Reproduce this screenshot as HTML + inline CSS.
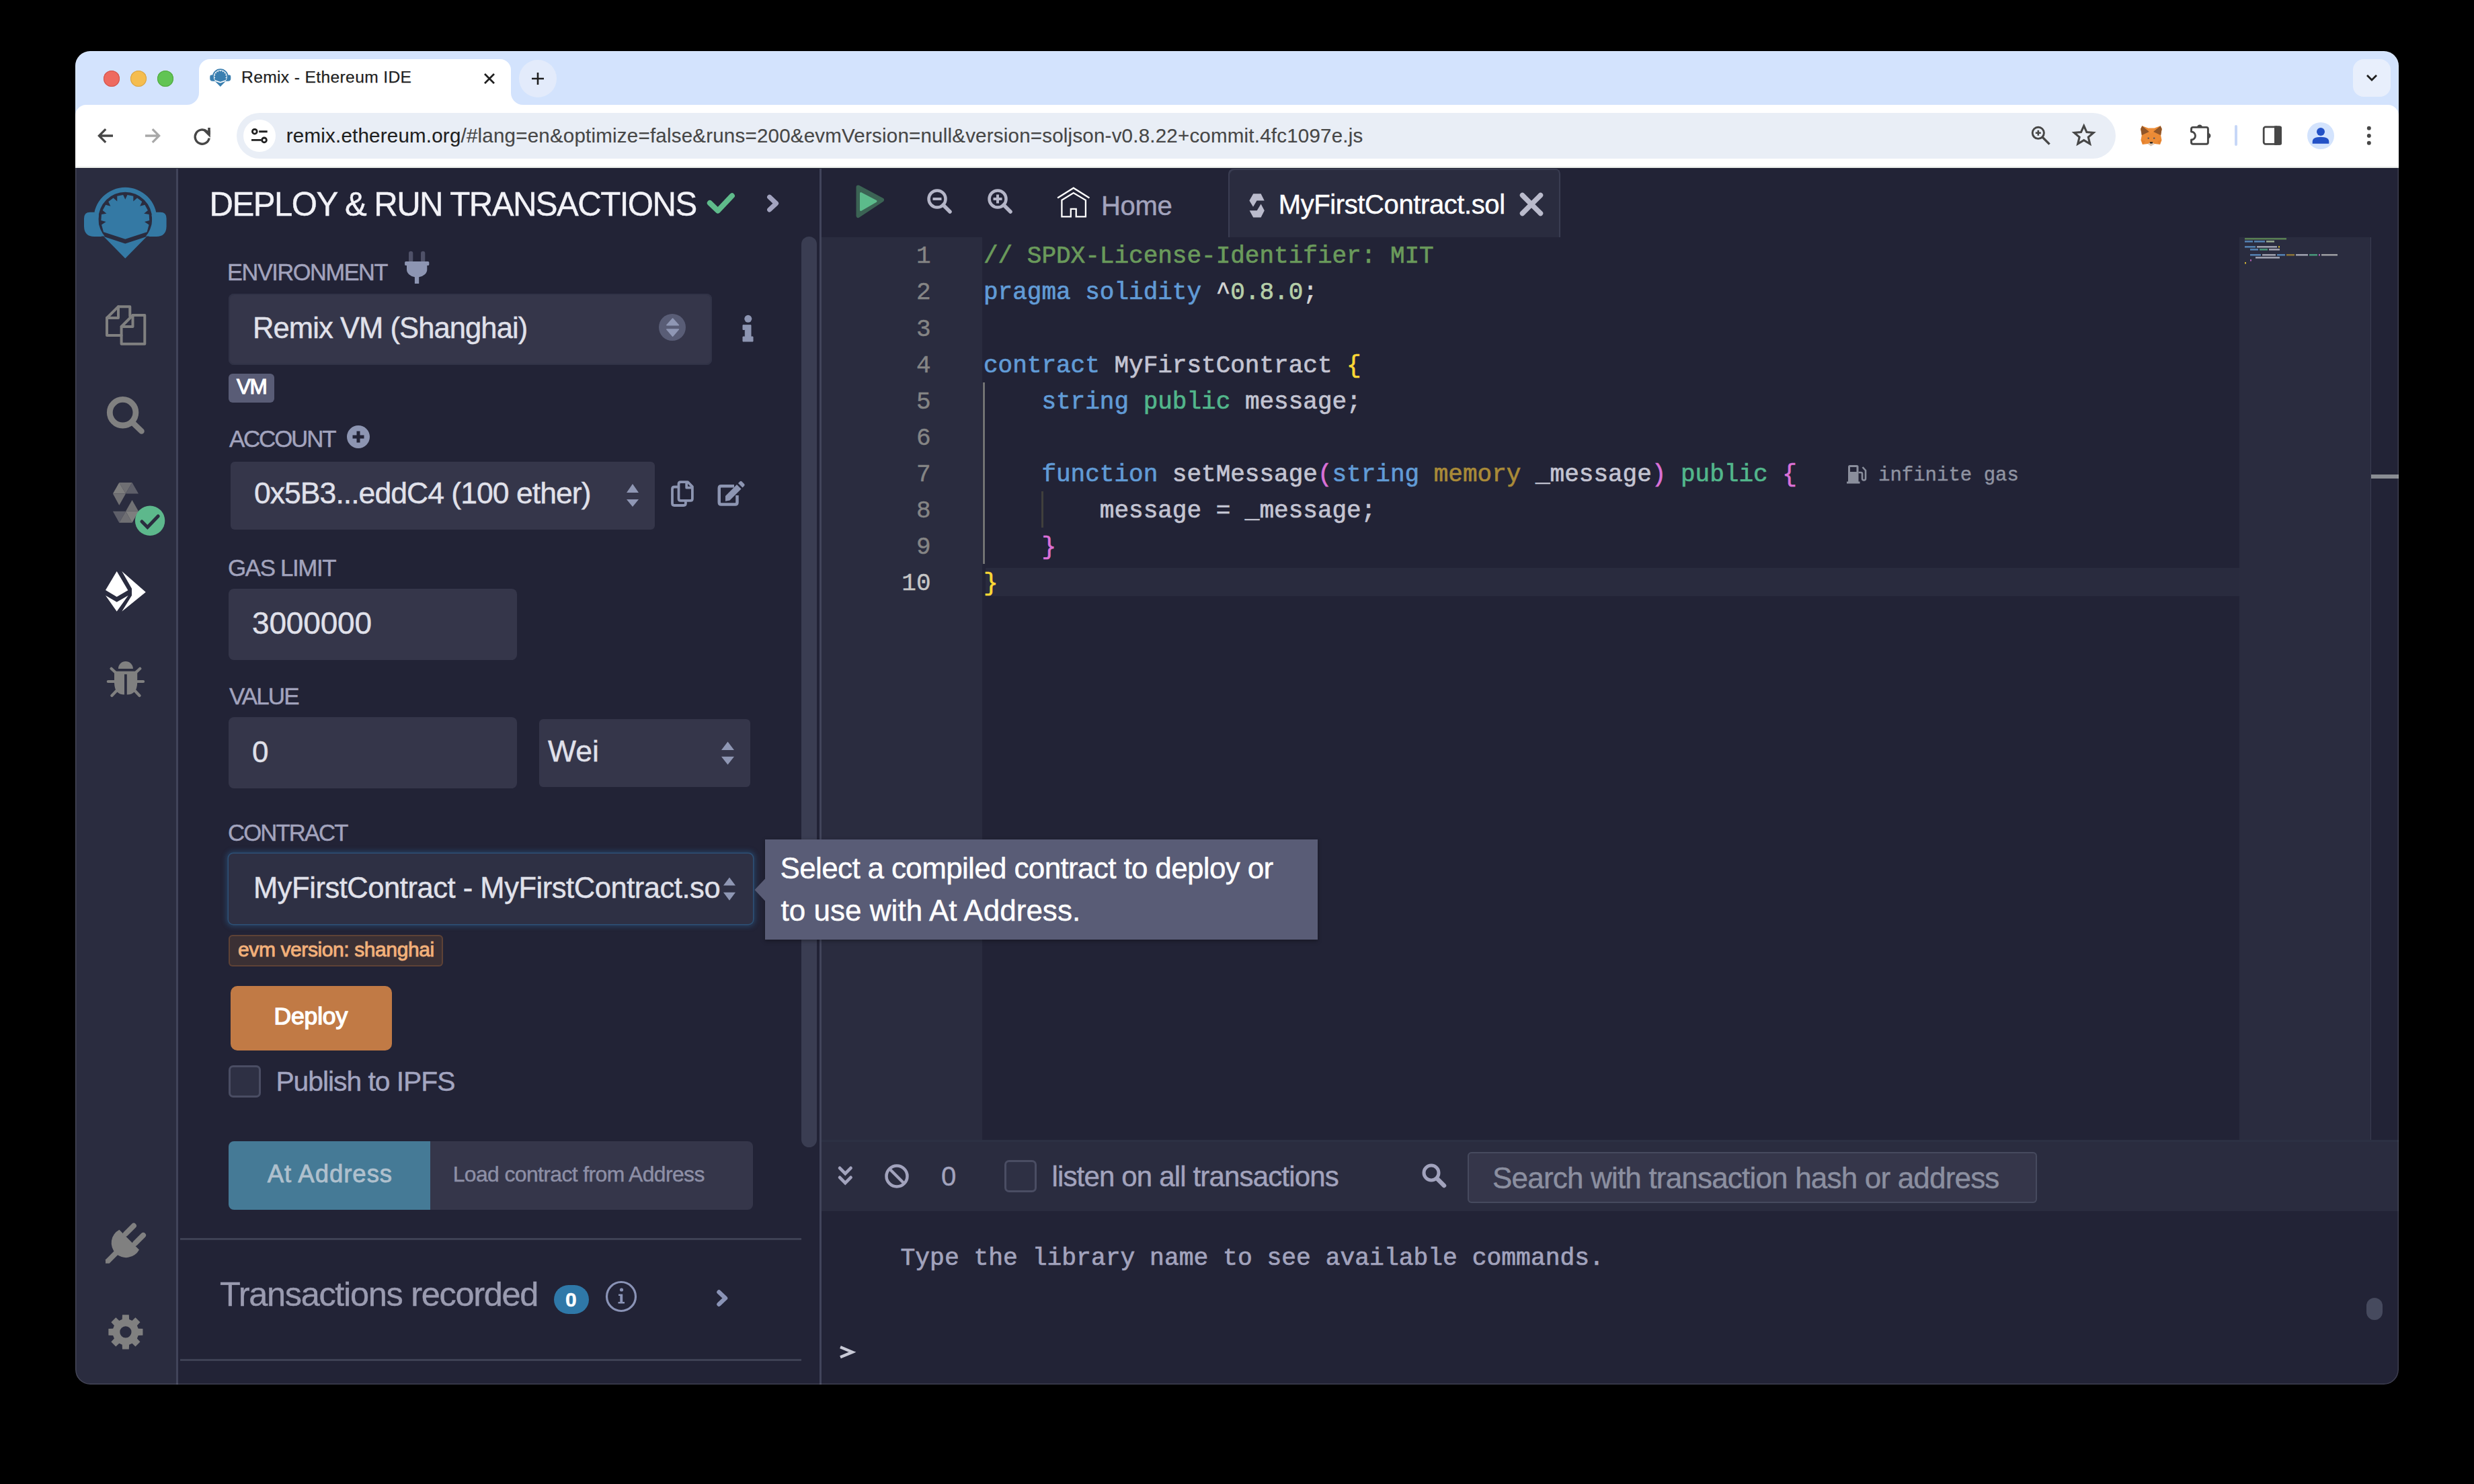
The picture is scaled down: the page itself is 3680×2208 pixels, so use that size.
<!DOCTYPE html><html><head><meta charset="utf-8"><style>
html,body{margin:0;padding:0;background:#000;width:3680px;height:2208px;overflow:hidden}
.r{position:absolute}
.s{position:absolute;overflow:visible}
.t{position:absolute;line-height:1;white-space:pre;-webkit-text-stroke-width:0.45px}
</style></head><body><div id="win" style="position:absolute;left:0;top:0;width:3680px;height:2208px;clip-path:inset(76px 112px 148px 112px round 22px)">
<div class="r" style="left:112px;top:76px;width:3456px;height:224px;background:#d3e3fd;"></div>
<div class="r" style="left:154px;top:105px;width:24px;height:24px;border-radius:12px;background:#ee6a5f;box-shadow:inset 0 0 0 1px #d0524a"></div>
<div class="r" style="left:194px;top:105px;width:24px;height:24px;border-radius:12px;background:#f5bd4f;box-shadow:inset 0 0 0 1px #d7a243"></div>
<div class="r" style="left:234px;top:105px;width:24px;height:24px;border-radius:12px;background:#61c454;box-shadow:inset 0 0 0 1px #50a83f"></div>
<svg class="s" style="left:0px;top:76px" width="3680" height="90" viewBox="0 0 3680 90"><path d="M 278 80 A 18 18 0 0 0 296 62 V 28 A 16 16 0 0 1 312 12 H 744 A 16 16 0 0 1 760 28 V 62 A 18 18 0 0 0 778 80 Z" fill="#fff"/></svg>
<div class="r" style="left:772px;top:89px;width:56px;height:56px;border-radius:28px;background:#e3ebfb"></div>
<svg class="s" style="left:788px;top:105px" width="24" height="24" viewBox="0 0 24 24"><path d="M12 3 V21 M3 12 H21" stroke="#1f1f1f" stroke-width="2.6" fill="none"/></svg>
<div class="r" style="left:3500px;top:88px;width:56px;height:56px;border-radius:16px;background:#e8effc"></div>
<svg class="s" style="left:3516px;top:104px" width="24" height="24" viewBox="0 0 24 24"><path d="M5 8 L12 15 L19 8" stroke="#1f1f1f" stroke-width="2.8" fill="none"/></svg>
<div class="r" style="left:112px;top:156px;width:3456px;height:92px;background:#fff;border-radius:16px 16px 0 0"></div>
<div class="r" style="left:112px;top:248px;width:3456px;height:2px;background:#e2e5e2;"></div>
<div class="r" style="left:352px;top:168px;width:2795px;height:68px;border-radius:34px;background:#e9eef6"></div>
<div class="r" style="left:362px;top:178px;width:48px;height:48px;border-radius:24px;background:#fff"></div>
<svg class="s" style="left:142px;top:188px" width="28" height="28" viewBox="0 0 28 28"><path d="M26 14 H6 M15.2 4.2 L5.4 14 L15.2 23.8" stroke="#474747" stroke-width="3.3" fill="none" stroke-linejoin="miter"/></svg>
<svg class="s" style="left:214px;top:188px" width="28" height="28" viewBox="0 0 28 28"><path d="M2 14 H22 M12.8 4.2 L22.6 14 L12.8 23.8" stroke="#a8a8a8" stroke-width="3.3" fill="none"/></svg>
<svg class="s" style="left:286px;top:188px" width="30" height="30" viewBox="0 0 30 30"><path d="M25.2 17.5 A 10.6 10.6 0 1 1 21.8 7.6" stroke="#474747" stroke-width="3.4" fill="none"/><path d="M16.2 6.2 H26.8 V 16.8 Z" fill="#474747"/><path d="M25 2 V 12" stroke="#474747" stroke-width="3.6"/></svg>
<svg class="s" style="left:374px;top:190px" width="24" height="24" viewBox="0 0 24 24"><circle cx="4.8" cy="5.7" r="3.4" stroke="#1f1f1f" stroke-width="2.8" fill="none"/><path d="M11.2 5.7 H23.7" stroke="#1f1f1f" stroke-width="2.9"/><circle cx="19" cy="18.4" r="3.4" stroke="#1f1f1f" stroke-width="2.8" fill="none"/><path d="M0 18.4 H14.5" stroke="#1f1f1f" stroke-width="2.9"/></svg>
<svg class="s" style="left:3010px;top:175px" width="60" height="50" viewBox="0 0 60 50"><circle cx="21.8" cy="22.8" r="8.6" stroke="#474747" stroke-width="2.9" fill="none"/><path d="M28 29 L38.6 39.6" stroke="#474747" stroke-width="3.3"/><path d="M21.8 18.8 V26.8 M17.8 22.8 H25.8" stroke="#474747" stroke-width="2.6"/></svg>
<svg class="s" style="left:3080px;top:182px" width="40" height="40" viewBox="0 0 40 40"><path d="M19.7 5.2 L23.9 14.6 L34 15.4 L26.3 22 L28.7 32 L19.7 26.6 L10.7 32 L13.1 22 L5.4 15.4 L15.5 14.6 Z" stroke="#474747" stroke-width="3.1" fill="none" stroke-linejoin="miter"/></svg>
<svg class="s" style="left:3183px;top:186px" width="34" height="34" viewBox="0 0 34 34"><path d="M3.3 1.35 L12.7 4.8 H21.2 L30.6 1.35 L32.7 5.8 L31.1 15.3 L32.5 22.6 L30.1 28.9 L21.7 27.9 L16.4 30.8 L12.2 27.9 L3.8 28.9 L1.45 22.6 L2.8 15.3 L1.2 5.8 Z" fill="#eb8b36"/><path d="M3.3 1.35 L13.8 10 L2.8 15.3 L1.2 5.8 Z M30.6 1.35 L20.1 10 L31.1 15.3 L32.7 5.8 Z" fill="#915629"/><path d="M12.7 4.8 H21.2 L20.1 10 L16.95 13 L13.8 10 Z" fill="#f08f3a"/><path d="M11.7 27.9 L16.4 31.5 L22.2 27.9 L19.6 26.5 H14.3 Z" fill="#d9c6b5"/><path d="M14.6 25.3 H19.3 L18.6 27.6 H15.3 Z" fill="#1a1a1a"/><path d="M11.6 19.6 L13.8 19.6 M20.1 19.6 L22.3 19.6" stroke="#3a4a6a" stroke-width="1.6"/><path d="M2 22 L8 24 L5 28.5 Z M32 22 L26 24 L29 28.5 Z" fill="#e07a2a" opacity="0.6"/></svg>
<svg class="s" style="left:3254px;top:180px" width="40" height="40" viewBox="0 0 40 40"><path d="M5.5 16 V12 Q5.5 9.4 8 9.4 H27.9 Q30.4 9.4 30.4 12 V32 Q30.4 34.2 27.9 34.2 H8 Q5.5 34.2 5.5 32 V28 A 6 6 0 0 0 5.5 16 Z" stroke="#474747" stroke-width="2.9" fill="none" stroke-linejoin="round"/><path d="M13.8 9.6 A 4.2 4.2 0 0 1 22.2 9.6 Z M30.2 17.8 A 4.2 4.2 0 0 1 30.2 26.2 Z" fill="#474747"/></svg>
<div class="r" style="left:3324px;top:186px;width:4px;height:31px;background:#c7d7f7;border-radius:2px"></div>
<svg class="s" style="left:3360px;top:182px" width="40" height="40" viewBox="0 0 40 40"><rect x="7.2" y="6.9" width="25.4" height="25.5" rx="2.8" stroke="#474747" stroke-width="2.8" fill="none"/><rect x="23" y="5.5" width="11" height="28.3" rx="2.5" fill="#474747"/><rect x="23" y="5.5" width="4" height="28.3" fill="#474747"/></svg>
<div class="r" style="left:3432px;top:182px;width:40px;height:40px;border-radius:20px;background:#d3e3fd"></div>
<svg class="s" style="left:3432px;top:182px" width="40" height="40" viewBox="0 0 40 40"><circle cx="20" cy="13.9" r="6" fill="#2351c6"/><path d="M7.7 31.8 V29 Q7.7 21.7 20 21.7 Q32.3 21.7 32.3 29 V31.8 Z" fill="#2351c6"/></svg>
<svg class="s" style="left:3512px;top:182px" width="24" height="40" viewBox="0 0 24 40"><circle cx="11.8" cy="8.8" r="3" fill="#474747"/><circle cx="11.8" cy="19.9" r="3" fill="#474747"/><circle cx="11.8" cy="30.8" r="3" fill="#474747"/></svg>
<svg class="s" style="left:716px;top:105px" width="24" height="24" viewBox="0 0 24 24"><path d="M5 5 L19 19 M19 5 L5 19" stroke="#1f1f1f" stroke-width="2.8"/></svg>
<div class="r" style="left:112px;top:250px;width:150px;height:1810px;background:#2a2c3f;"></div>
<div class="r" style="left:262px;top:250px;width:3px;height:1810px;background:#41445a;"></div>
<div class="r" style="left:265px;top:250px;width:954px;height:1810px;background:#222336;"></div>
<div class="r" style="left:1219px;top:250px;width:3px;height:1810px;background:#41445a;"></div>
<div class="r" style="left:1222px;top:250px;width:2346px;height:1810px;background:#222336;"></div>
<div class="r" style="left:112px;top:250px;width:3456px;height:1px;background:#1a1b2e;"></div>
<svg class="s" style="left:120px;top:270px" width="135" height="120" viewBox="0 0 135 120"><clipPath id="rc3479a4"><rect x="0" y="0" width="135" height="81.5"/></clipPath><path clip-path="url(#rc3479a4)" fill-rule="evenodd" d="M 19.299999999999997 55.8 A 47 47 0 1 1 113.3 55.8 A 47 47 0 1 1 19.299999999999997 55.8 Z M 26.299999999999997 55.8 A 40 40 0 1 0 106.3 55.8 A 40 40 0 1 0 26.299999999999997 55.8 Z" fill="#3479a4"/><path d="M 20 45.7 H 14 Q 5 45.7 5 55 V 67 Q 5.5 82 20 82 H 31 L 27.5 72 Q 25.5 60 27 50 Z" fill="#3479a4"/><path d="M 112.6 45.7 H 118.6 Q 127.6 45.7 127.6 55 V 67 Q 127.1 82 112.6 82 H 101.6 L 105.1 72 Q 107.1 60 105.6 50 Z" fill="#3479a4"/><path d="M31.08 64.58 L31.29 64.20 L37.62 60.09 L30.37 58.00 L30.96 48.93 L38.42 47.81 L32.69 42.90 L37.18 34.64 L44.41 36.77 L41.29 29.90 L48.57 24.47 L54.27 29.41 L54.28 21.86 L63.16 19.94 L66.30 26.80 L69.44 19.94 L78.32 21.86 L78.33 29.41 L84.03 24.47 L91.31 29.90 L88.19 36.77 L95.42 34.64 L99.91 42.90 L94.18 47.81 L101.64 48.93 L102.23 58.00 L94.98 60.09 L101.31 64.20 L101.52 64.58 L98.60 75.20 L66.30 85.70 L34.00 75.20 Z" fill="#3479a4"/><path d="M 34.4 82 L 66.3 92.5 L 98.2 82 L 66.3 114.4 Z" fill="#3479a4"/></svg>
<svg class="s" style="left:310.7px;top:99.8px" width="34.2" height="30.4" viewBox="0 0 135 120"><clipPath id="rc3a7fb0"><rect x="0" y="0" width="135" height="81.5"/></clipPath><path clip-path="url(#rc3a7fb0)" fill-rule="evenodd" d="M 19.299999999999997 55.8 A 47 47 0 1 1 113.3 55.8 A 47 47 0 1 1 19.299999999999997 55.8 Z M 26.299999999999997 55.8 A 40 40 0 1 0 106.3 55.8 A 40 40 0 1 0 26.299999999999997 55.8 Z" fill="#3a7fb0"/><path d="M 20 45.7 H 14 Q 5 45.7 5 55 V 67 Q 5.5 82 20 82 H 31 L 27.5 72 Q 25.5 60 27 50 Z" fill="#3a7fb0"/><path d="M 112.6 45.7 H 118.6 Q 127.6 45.7 127.6 55 V 67 Q 127.1 82 112.6 82 H 101.6 L 105.1 72 Q 107.1 60 105.6 50 Z" fill="#3a7fb0"/><path d="M31.08 64.58 L31.29 64.20 L37.62 60.09 L30.37 58.00 L30.96 48.93 L38.42 47.81 L32.69 42.90 L37.18 34.64 L44.41 36.77 L41.29 29.90 L48.57 24.47 L54.27 29.41 L54.28 21.86 L63.16 19.94 L66.30 26.80 L69.44 19.94 L78.32 21.86 L78.33 29.41 L84.03 24.47 L91.31 29.90 L88.19 36.77 L95.42 34.64 L99.91 42.90 L94.18 47.81 L101.64 48.93 L102.23 58.00 L94.98 60.09 L101.31 64.20 L101.52 64.58 L98.60 75.20 L66.30 85.70 L34.00 75.20 Z" fill="#3a7fb0"/><path d="M 34.4 82 L 66.3 92.5 L 98.2 82 L 66.3 114.4 Z" fill="#3a7fb0"/></svg>
<svg class="s" style="left:150px;top:440px" width="80" height="80" viewBox="0 0 80 80"><g stroke="#808080" stroke-width="4" fill="none" stroke-linejoin="round" stroke-linecap="round"><path d="M43.3 30.5 V16.2 H26 L9 33 V58.9 H30.6"/><path d="M26 16.2 V33 H9"/><path d="M47.5 29 H65.3 V71.8 H30.6 V46 Z"/><path d="M47.5 29 V46 H30.6"/></g></svg>
<svg class="s" style="left:150px;top:580px" width="80" height="80" viewBox="0 0 80 80"><circle cx="32.6" cy="33.7" r="19.3" stroke="#808080" stroke-width="8.8" fill="none"/><path d="M48 49.5 L60.5 61.5" stroke="#808080" stroke-width="8.5" stroke-linecap="round"/></svg>
<svg class="s" style="left:150px;top:705px" width="100" height="100" viewBox="0 0 100 100"><path d="M27.3 13 L46.5 13 L37 29.6 Z" fill="#6f6f73"/><path d="M27.3 13 L37 29.6 L17.9 29.6 Z" fill="#7e7e7e"/><path d="M46.5 13 L56 29.6 L37 29.6 Z" fill="#5e5f69"/><path d="M17.9 29.6 L37 29.6 L27.3 46.8 Z" fill="#717174"/><path d="M46.5 39 L56 55.8 L37 55.8 Z" fill="#717174"/><path d="M37 55.8 L56 55.8 L46.5 72.8 Z" fill="#7e7e7e"/><path d="M17.9 55.8 L37 55.8 L27.3 72.8 Z" fill="#5e5f69"/><path d="M37 55.8 L46.5 72.8 L27.3 72.8 Z" fill="#6f6f73"/><circle cx="73.1" cy="69.7" r="22.2" fill="#5db88c"/><path d="M61 71 L69.4 79.5 L85.2 63" stroke="#2a2c3f" stroke-width="5" fill="none" stroke-linecap="round"/></svg>
<svg class="s" style="left:150px;top:840px" width="80" height="80" viewBox="0 0 80 80"><g fill="#fff"><path d="M23.7 10 L40.4 38.3 L23.7 48 L7 38 Z"/><path d="M7 46 L23.7 55.8 L40.7 46 L23.7 69.8 Z"/><path d="M31.3 10 L66.8 41 L31.3 69.8 L46 46 L46 35.8 Z"/></g></svg>
<svg class="s" style="left:150px;top:970px" width="80" height="80" viewBox="0 0 80 80"><g fill="#808080"><path d="M25.9 25 A 11 11 0 0 1 47.9 25 Z"/><path d="M20 28.8 H54.2 V45 Q54.2 63.6 38.8 63.6 V33.2 H35 V63.6 Q20 63.6 20 45 Z"/></g><g stroke="#808080" stroke-width="4.2" stroke-linecap="round"><path d="M15.6 24.8 L22 30.7 M58.3 24.8 L51.9 30.7 M10.8 44 H20 M63.1 44 H54 M16.4 65 L24 57 M57.5 65 L50 57"/></g></svg>
<svg class="s" style="left:150px;top:1810px" width="80" height="80" viewBox="0 0 80 80"><g fill="#808080"><g transform="translate(42.2 34.6) rotate(45)"><path d="M -20.9 0 H 20.9 A 21.9 21.9 0 1 1 -20.9 0 Z"/><rect x="-14" y="-23.5" width="8" height="25" rx="4"/><rect x="6" y="-23.5" width="8" height="25" rx="4"/></g><path d="M34.9 36.3 L7 64.2 L7 69.8 L12.6 69.8 L40.5 41.9 Z"/></g></svg>
<svg class="s" style="left:150px;top:1945px" width="80" height="80" viewBox="0 0 80 80"><path fill-rule="evenodd" fill="#808080" d="M31.70 18.11 L31.99 11.37 L41.81 11.37 L42.10 18.11 L46.51 19.93 L51.48 15.37 L58.43 22.32 L53.87 27.29 L55.69 31.70 L62.43 31.99 L62.43 41.81 L55.69 42.10 L53.87 46.51 L58.43 51.48 L51.48 58.43 L46.51 53.87 L42.10 55.69 L41.81 62.43 L31.99 62.43 L31.70 55.69 L27.29 53.87 L22.32 58.43 L15.37 51.48 L19.93 46.51 L18.11 42.10 L11.37 41.81 L11.37 31.99 L18.11 31.70 L19.93 27.29 L15.37 22.32 L22.32 15.37 L27.29 19.93 Z M 45.5 36.9 A 8.6 8.6 0 1 0 28.3 36.9 A 8.6 8.6 0 1 0 45.5 36.9 Z"/></svg>
<div class="t" style="left:311.61px;top:279.77px;font-family:'Liberation Sans', sans-serif;font-size:49.15px;font-weight:400;color:#f2f2f7;letter-spacing:-1.549px;">DEPLOY &amp; RUN TRANSACTIONS</div>
<svg class="s" style="left:1040px;top:280px" width="130" height="50" viewBox="0 0 130 50"><path d="M15.8 22 L27.9 33.6 L48.9 11.3" stroke="#5fbb8b" stroke-width="8" fill="none" stroke-linecap="round" stroke-linejoin="round"/><path d="M104.6 13.1 L114.6 22.6 L104.6 32" stroke="#a2a3bf" stroke-width="7" fill="none" stroke-linecap="round" stroke-linejoin="round"/></svg>
<div class="t" style="left:338.09px;top:388.01px;font-family:'Liberation Sans', sans-serif;font-size:34.31px;font-weight:400;color:#a2a3bd;letter-spacing:-1.408px;">ENVIRONMENT</div>
<svg class="s" style="left:590px;top:365px" width="60" height="60" viewBox="0 0 60 60"><rect x="18" y="8.7" width="6.3" height="17" rx="3.1" fill="#4f5168"/><rect x="36" y="8.7" width="6.3" height="17" rx="3.1" fill="#4f5168"/><path d="M12.1 25.5 Q12.1 23.9 13.7 23.9 H46.7 Q48.3 23.9 48.3 25.5 V28.5 Q48.3 30.1 46.7 30.1 H45.3 V36 A 15.15 11.5 0 0 1 33.2 47.3 V57 H26.9 V47.3 A 15.15 11.5 0 0 1 15 36 V30.1 H13.7 Q12.1 30.1 12.1 28.5 Z" fill="#8d95b2"/></svg>
<div class="r" style="left:340px;top:437px;width:719px;height:106px;background:#35364a;border-radius:8px;box-shadow:inset 0 0 0 2px #303246"></div>
<div class="t" style="left:376.09px;top:466.71px;font-family:'Liberation Sans', sans-serif;font-size:43.54px;font-weight:400;color:#e0e1ea;letter-spacing:-0.929px;">Remix VM (Shanghai)</div>
<svg class="s" style="left:980px;top:467px" width="40" height="40" viewBox="0 0 40 40"><circle cx="20" cy="20" r="20" fill="#595d76"/><path d="M11.8 16.7 L20.6 7 L29.4 16.7 Z M11.8 23 L20.6 33.3 L29.4 23 Z" fill="#8f97b4" stroke="#8f97b4" stroke-width="1.5" stroke-linejoin="round"/></svg>
<svg class="s" style="left:1100px;top:465px" width="25" height="48" viewBox="0 0 25 48"><circle cx="12.8" cy="9.3" r="5.5" fill="#8d95b2"/><path d="M5 18.7 H17 V36 H20 V43 H5 V36 H8.3 V25.5 H5 Z" fill="#8d95b2" stroke="#8d95b2" stroke-width="1" stroke-linejoin="round"/></svg>
<div class="r" style="left:340px;top:556px;width:68px;height:43px;background:#595c76;border-radius:6px"></div>
<div class="t" style="left:352.00px;top:559.68px;font-family:'Liberation Sans', sans-serif;font-size:31.5px;font-weight:400;color:#ffffff;letter-spacing:-1.500px;-webkit-text-stroke-width:1.2px">VM</div>
<div class="t" style="left:341.00px;top:635.52px;font-family:'Liberation Sans', sans-serif;font-size:34.89px;font-weight:400;color:#a2a3bd;letter-spacing:-2.163px;">ACCOUNT</div>
<svg class="s" style="left:515px;top:632px" width="36" height="36" viewBox="0 0 36 36"><circle cx="18" cy="18" r="17" fill="#8d95b2"/><path d="M18 9.5 V26.5 M9.5 18 H26.5" stroke="#222336" stroke-width="5"/></svg>
<div class="r" style="left:343px;top:687px;width:631px;height:101px;background:#35364a;border-radius:6px"></div>
<div class="t" style="left:378.00px;top:712.40px;font-family:'Liberation Sans', sans-serif;font-size:44.5px;font-weight:400;color:#e0e1ea;letter-spacing:-0.958px;">0x5B3...eddC4 (100 ether)</div>
<svg class="s" style="left:928px;top:716px" width="26" height="42" viewBox="0 0 26 42"><path d="M4 17 L13 4 L22 17 Z M4 27 L13 38 L22 27 Z" fill="#8f97b4"/></svg>
<svg class="s" style="left:990px;top:700px" width="130" height="70" viewBox="0 0 130 70"><g stroke="#8d95b2" stroke-width="3.8" fill="none" stroke-linejoin="round"><path d="M19.5 24.5 H13 Q10 24.5 10 27.5 V49 Q10 52 13 52 H26.9 Q29.9 52 29.9 49 V44.9"/><path d="M22.5 17.1 H33 L39.9 24 V41.9 Q39.9 44.9 36.9 44.9 H22.5 Q19.5 44.9 19.5 41.9 V20.1 Q19.5 17.1 22.5 17.1 Z"/><path d="M31.2 17.3 V25.7 H39.7"/></g><path d="M102 23.25 H82.75 Q79.75 23.25 79.75 26.25 V47.5 Q79.75 50.5 82.75 50.5 H103.5 Q106.5 50.5 106.5 47.5 V37" stroke="#8d95b2" stroke-width="4.5" fill="none" stroke-linejoin="round"/><path d="M89 38 L106 21 L112.5 27.5 L95.5 44.5 L89 45.8 Z" fill="#8d95b2"/><path d="M108 19 L110.5 16.5 Q112 15 113.5 16.5 L117 20 Q118.5 21.5 117 23 L114.5 25.5 Z" fill="#8d95b2"/></svg>
<div class="t" style="left:339.07px;top:827.51px;font-family:'Liberation Sans', sans-serif;font-size:34.9px;font-weight:400;color:#a2a3bd;letter-spacing:-1.388px;">GAS LIMIT</div>
<div class="r" style="left:340px;top:876px;width:429px;height:106px;background:#35364a;border-radius:8px"></div>
<div class="t" style="left:375.00px;top:903.93px;font-family:'Liberation Sans', sans-serif;font-size:46px;font-weight:400;color:#e0e1ea;letter-spacing:-0.167px;">3000000</div>
<div class="t" style="left:341.00px;top:1018.41px;font-family:'Liberation Sans', sans-serif;font-size:35.02px;font-weight:400;color:#a2a3bd;letter-spacing:-1.912px;">VALUE</div>
<div class="r" style="left:340px;top:1067px;width:429px;height:106px;background:#35364a;border-radius:8px"></div>
<div class="t" style="left:375.00px;top:1096.52px;font-family:'Liberation Sans', sans-serif;font-size:44px;font-weight:400;color:#e0e1ea;letter-spacing:0.000px;">0</div>
<div class="r" style="left:802px;top:1070px;width:314px;height:101px;background:#35364a;border-radius:6px"></div>
<div class="t" style="left:815.00px;top:1096.40px;font-family:'Liberation Sans', sans-serif;font-size:44.5px;font-weight:400;color:#e0e1ea;letter-spacing:0.000px;">Wei</div>
<svg class="s" style="left:1068px;top:1098px" width="30" height="44" viewBox="0 0 30 44"><path d="M5 18 L14.5 5.6 L24 18 Z M5 27.8 L14.5 39.7 L24 27.8 Z" fill="#8f97b4"/></svg>
<div class="t" style="left:339.08px;top:1221.73px;font-family:'Liberation Sans', sans-serif;font-size:34.64px;font-weight:400;color:#a2a3bd;letter-spacing:-1.867px;">CONTRACT</div>
<div class="r" style="left:340px;top:1270px;width:780px;height:105px;background:#2e3044;border-radius:7px;box-shadow:0 0 0 1.5px rgba(48,90,130,0.75), 0 0 7px 4px rgba(45,100,150,0.42)"></div>
<div class="r" style="left:340px;top:1270px;width:733px;height:105px;overflow:hidden"><div class="t" style="left:37.00px;top:29.74px;font-family:'Liberation Sans', sans-serif;font-size:43.5px;font-weight:400;color:#e0e1ea;letter-spacing:-0.457px;">MyFirstContract - MyFirstContract.so</div></div>
<svg class="s" style="left:1072px;top:1300px" width="26" height="44" viewBox="0 0 26 44"><path d="M4 17.5 L13 5.6 L22 17.5 Z M4 27.8 L13 39.7 L22 27.8 Z" fill="#8f97b4"/></svg>
<div class="r" style="left:340px;top:1391px;width:319px;height:47px;background:#3b3034;border-radius:6px;box-shadow:inset 0 0 0 2px #5e4236"></div>
<div class="t" style="left:354.00px;top:1398.25px;font-family:'Liberation Sans', sans-serif;font-size:30px;font-weight:400;color:#f2b07a;letter-spacing:-0.400px;-webkit-text-stroke:0.9px #f2b07a">evm version: shanghai</div>
<div class="r" style="left:343px;top:1467px;width:240px;height:96px;background:#c17a45;border-radius:10px"></div>
<div class="t" style="left:407.50px;top:1495.00px;font-family:'Liberation Sans', sans-serif;font-size:35.5px;font-weight:400;color:#ffffff;letter-spacing:-0.160px;-webkit-text-stroke-width:1.4px">Deploy</div>
<div class="r" style="left:340px;top:1585px;width:48px;height:48px;background:#2e3044;border-radius:7px;box-shadow:inset 0 0 0 3px #4a4d63"></div>
<div class="t" style="left:410.38px;top:1588.91px;font-family:'Liberation Sans', sans-serif;font-size:40.82px;font-weight:400;color:#a3a5c0;letter-spacing:-1.021px;">Publish to IPFS</div>
<div class="r" style="left:1192px;top:352px;width:23px;height:1355px;background:#3a3d52;border-radius:12px"></div>
<div class="r" style="left:340px;top:1698px;width:300px;height:102px;background:#457a96;border-radius:8px 0 0 8px"></div>
<div class="t" style="left:397.80px;top:1729.16px;font-family:'Liberation Sans', sans-serif;font-size:36.5px;font-weight:400;color:#afc0cd;letter-spacing:0.978px;-webkit-text-stroke-width:0.8px">At Address</div>
<div class="r" style="left:640px;top:1698px;width:480px;height:102px;background:#35364a;border-radius:0 8px 8px 0"></div>
<div class="t" style="left:673.76px;top:1732.10px;font-family:'Liberation Sans', sans-serif;font-size:31.83px;font-weight:400;color:#8d8fa6;letter-spacing:-0.584px;">Load contract from Address</div>
<div class="r" style="left:268px;top:1842px;width:924px;height:3px;background:#3e4154;"></div>
<div class="r" style="left:268px;top:2022px;width:924px;height:3px;background:#3e4154;"></div>
<div class="t" style="left:327.03px;top:1901.33px;font-family:'Liberation Sans', sans-serif;font-size:50.5px;font-weight:400;color:#9a9bb0;letter-spacing:-1.313px;">Transactions recorded</div>
<div class="r" style="left:824px;top:1912px;width:52px;height:43px;background:#2f78a8;border-radius:22px"></div>
<div class="t" style="left:841.00px;top:1918.65px;font-family:'Liberation Sans', sans-serif;font-size:30px;font-weight:700;color:#ffffff;letter-spacing:0.000px;">0</div>
<svg class="s" style="left:899px;top:1904px" width="50" height="50" viewBox="0 0 50 50"><circle cx="25" cy="25" r="21.5" stroke="#8a93b6" stroke-width="3.2" fill="none"/><circle cx="25.5" cy="15" r="2.6" fill="#8a93b6"/><path d="M21 21.5 H27.2 V33 H30 V35.5 H20.5 V33 H23.3 V24 H21 Z" fill="#8a93b6"/></svg>
<svg class="s" style="left:1060px;top:1914px" width="30" height="36" viewBox="0 0 30 36"><path d="M9.5 8.5 L19 17.5 L9.5 26.5" stroke="#8a93b6" stroke-width="6.5" fill="none" stroke-linecap="round" stroke-linejoin="round"/></svg>
<svg class="s" style="left:1250px;top:260px" width="80" height="80" viewBox="0 0 80 80"><path d="M26.5 18.5 L62 37.5 L26.5 61 Z" fill="#3b6354" stroke="#3b6354" stroke-width="6" stroke-linejoin="round"/><path d="M30.5 27.5 L53 39.4 L30.5 52.5 Z" fill="#5cbb8b" stroke="#5cbb8b" stroke-width="3" stroke-linejoin="round"/></svg>
<svg class="s" style="left:1376px;top:278px" width="46" height="46" viewBox="0 0 46 46"><circle cx="18" cy="18" r="12.5" stroke="#b5b6c8" stroke-width="4.5" fill="none"/><path d="M27 27 L37 37" stroke="#b5b6c8" stroke-width="5.5" stroke-linecap="round"/><path d="M11.5 18 H24.5" stroke="#b5b6c8" stroke-width="4"/></svg>
<svg class="s" style="left:1466px;top:278px" width="46" height="46" viewBox="0 0 46 46"><circle cx="18" cy="18" r="12.5" stroke="#b5b6c8" stroke-width="4.5" fill="none"/><path d="M27 27 L37 37" stroke="#b5b6c8" stroke-width="5.5" stroke-linecap="round"/><path d="M11.5 18 H24.5 M18 11.5 V24.5" stroke="#b5b6c8" stroke-width="4"/></svg>
<svg class="s" style="left:1550px;top:260px" width="80" height="80" viewBox="0 0 80 80"><path d="M23.1 34.4 L46.8 19.7 L70.4 34.4" stroke="#ffffff" stroke-width="2.3" fill="none"/><path d="M29.4 37.8 L46.8 27.1 L64.9 37.8 V62.3 H50.7 V50.8 H42.8 V62.3 H29.4 Z" stroke="#ffffff" stroke-width="2.3" fill="none" stroke-linejoin="miter"/></svg>
<div class="t" style="left:1638.00px;top:285.60px;font-family:'Liberation Sans', sans-serif;font-size:40px;font-weight:400;color:#a2a3bd;letter-spacing:-0.333px;">Home</div>
<div class="r" style="left:1827px;top:251px;width:494px;height:102px;background:#2a2c3f;border-radius:8px 8px 0 0;box-shadow:inset 2px 2px 0 #3a3d52, inset -2px 0 0 #3a3d52"></div>
<svg class="s" style="left:1850px;top:280px" width="40" height="50" viewBox="0 0 40 50"><g fill="#babbcc"><path d="M14.2 8.3 H25.6 L30.7 18.4 H19.5 L14 27.8 L8.4 18.4 Z"/><path d="M25.6 23.6 L30.8 33.3 L25.6 43.5 H14.2 L8.6 33.3 H19.7 Z"/></g></svg>
<div class="t" style="left:1901.80px;top:284.20px;font-family:'Liberation Sans', sans-serif;font-size:40px;font-weight:400;color:#ffffff;letter-spacing:-0.400px;">MyFirstContract.sol</div>
<svg class="s" style="left:2256px;top:282px" width="44" height="44" viewBox="0 0 44 44"><path d="M8.5 8.5 L35.5 35.5 M35.5 8.5 L8.5 35.5" stroke="#babbcc" stroke-width="7.5" stroke-linecap="round"/></svg>
<div class="r" style="left:1222px;top:353px;width:239px;height:1344px;background:#2a2c3f;"></div>
<div class="r" style="left:3331px;top:353px;width:196px;height:1344px;background:#2a2c3f;"></div>
<div class="r" style="left:3526px;top:353px;width:1px;height:1344px;background:#3a3c50;"></div>
<div class="r" style="left:1466px;top:845px;width:1865px;height:42px;background:#292b3e;"></div>
<div class="r" style="left:1462px;top:569px;width:3px;height:270px;background:#727272;"></div>
<div class="r" style="left:1549px;top:731px;width:3px;height:54px;background:#403f3c;"></div>
<div class="t" style="left:1362.90px;top:364.32px;font-family:'Liberation Mono', monospace;font-size:36px;color:#858585">1</div>
<div class="t" style="left:1362.90px;top:418.45px;font-family:'Liberation Mono', monospace;font-size:36px;color:#858585">2</div>
<div class="t" style="left:1362.90px;top:472.58px;font-family:'Liberation Mono', monospace;font-size:36px;color:#858585">3</div>
<div class="t" style="left:1362.90px;top:526.71px;font-family:'Liberation Mono', monospace;font-size:36px;color:#858585">4</div>
<div class="t" style="left:1362.90px;top:580.84px;font-family:'Liberation Mono', monospace;font-size:36px;color:#858585">5</div>
<div class="t" style="left:1362.90px;top:634.97px;font-family:'Liberation Mono', monospace;font-size:36px;color:#858585">6</div>
<div class="t" style="left:1362.90px;top:689.10px;font-family:'Liberation Mono', monospace;font-size:36px;color:#858585">7</div>
<div class="t" style="left:1362.90px;top:743.23px;font-family:'Liberation Mono', monospace;font-size:36px;color:#858585">8</div>
<div class="t" style="left:1362.90px;top:797.36px;font-family:'Liberation Mono', monospace;font-size:36px;color:#858585">9</div>
<div class="t" style="left:1341.30px;top:851.49px;font-family:'Liberation Mono', monospace;font-size:36px;color:#c6c6c6">10</div>
<div class="t" style="left:1463px;top:364.32px;font-family:'Liberation Mono', monospace;font-size:36px;white-space:pre;-webkit-text-stroke-width:0.7px"><span style="color:#6a9a5b">// SPDX-License-Identifier: MIT</span></div>
<div class="t" style="left:1463px;top:418.45px;font-family:'Liberation Mono', monospace;font-size:36px;white-space:pre;-webkit-text-stroke-width:0.7px"><span style="color:#619bd6">pragma</span><span style="color:#d4d4d4"> </span><span style="color:#619bd6">solidity</span><span style="color:#d4d4d4"> ^</span><span style="color:#b5cea8">0.8.0</span><span style="color:#d4d4d4">;</span></div>
<div class="t" style="left:1463px;top:526.71px;font-family:'Liberation Mono', monospace;font-size:36px;white-space:pre;-webkit-text-stroke-width:0.7px"><span style="color:#619bd6">contract</span><span style="color:#c3c4d2"> MyFirstContract </span><span style="color:#fdd835">{</span></div>
<div class="t" style="left:1463px;top:580.84px;font-family:'Liberation Mono', monospace;font-size:36px;white-space:pre;-webkit-text-stroke-width:0.7px"><span style="color:#619bd6">    string</span><span style="color:#d4d4d4"> </span><span style="color:#52b68b">public</span><span style="color:#c3c4d2"> message;</span></div>
<div class="t" style="left:1463px;top:689.10px;font-family:'Liberation Mono', monospace;font-size:36px;white-space:pre;-webkit-text-stroke-width:0.7px"><span style="color:#619bd6">    function</span><span style="color:#c3c4d2"> setMessage</span><span style="color:#da70d6">(</span><span style="color:#619bd6">string</span><span style="color:#d4d4d4"> </span><span style="color:#a98a38">memory</span><span style="color:#c3c4d2"> _message</span><span style="color:#da70d6">)</span><span style="color:#d4d4d4"> </span><span style="color:#52b68b">public</span><span style="color:#d4d4d4"> </span><span style="color:#da70d6">{</span></div>
<div class="t" style="left:1463px;top:743.23px;font-family:'Liberation Mono', monospace;font-size:36px;white-space:pre;-webkit-text-stroke-width:0.7px"><span style="color:#c3c4d2">        message = _message;</span></div>
<div class="t" style="left:1463px;top:797.36px;font-family:'Liberation Mono', monospace;font-size:36px;white-space:pre;-webkit-text-stroke-width:0.7px"><span style="color:#da70d6">    }</span></div>
<div class="t" style="left:1463px;top:851.49px;font-family:'Liberation Mono', monospace;font-size:36px;white-space:pre;-webkit-text-stroke-width:0.7px"><span style="color:#fdd835">}</span></div>
<svg class="s" style="left:2745px;top:690px" width="36" height="36" viewBox="0 0 36 36"><path d="M4 4.5 Q4 2 6.5 2 H17 Q19.5 2 19.5 4.5 V27 H4 Z" fill="#8a8e9c"/><rect x="7" y="5" width="9.5" height="7" fill="#222336"/><path d="M2 28 H21.5" stroke="#8a8e9c" stroke-width="3"/><path d="M19.5 13 H23 Q25 13 25 15 V22 Q25 24.5 27.5 24.5 Q30 24.5 30 22 V10 L25.5 5" stroke="#8a8e9c" stroke-width="2.6" fill="none"/></svg>
<div class="t" style="left:2794px;top:692.61px;font-family:'Liberation Mono', monospace;font-size:29px;color:#8f93a1;white-space:pre">infinite gas</div>
<div class="r" style="left:3527px;top:706px;width:41px;height:6px;background:#8a8d93;"></div>
<svg class="s" style="left:0;top:0" width="3680" height="420"><rect x="3339.0" y="354.0" width="62.0" height="2.6" fill="#6a9a5b" opacity="0.75"/><rect x="3339.0" y="358.0" width="12.0" height="2.6" fill="#619bd6" opacity="0.75"/><rect x="3353.0" y="358.0" width="16.0" height="2.6" fill="#619bd6" opacity="0.75"/><rect x="3371.0" y="358.0" width="12.0" height="2.6" fill="#b5cea8" opacity="0.75"/><rect x="3339.0" y="366.0" width="16.0" height="2.6" fill="#619bd6" opacity="0.75"/><rect x="3357.0" y="366.0" width="30.0" height="2.6" fill="#c3c4d2" opacity="0.75"/><rect x="3389.0" y="366.0" width="2.0" height="2.6" fill="#fdd835" opacity="0.75"/><rect x="3347.0" y="370.0" width="12.0" height="2.6" fill="#619bd6" opacity="0.75"/><rect x="3361.0" y="370.0" width="12.0" height="2.6" fill="#52b68b" opacity="0.75"/><rect x="3375.0" y="370.0" width="16.0" height="2.6" fill="#c3c4d2" opacity="0.75"/><rect x="3347.0" y="378.0" width="16.0" height="2.6" fill="#619bd6" opacity="0.75"/><rect x="3365.0" y="378.0" width="20.0" height="2.6" fill="#c3c4d2" opacity="0.75"/><rect x="3387.0" y="378.0" width="12.0" height="2.6" fill="#619bd6" opacity="0.75"/><rect x="3401.0" y="378.0" width="12.0" height="2.6" fill="#a98a38" opacity="0.75"/><rect x="3415.0" y="378.0" width="18.0" height="2.6" fill="#c3c4d2" opacity="0.75"/><rect x="3435.0" y="378.0" width="12.0" height="2.6" fill="#52b68b" opacity="0.75"/><rect x="3449.0" y="378.0" width="2.0" height="2.6" fill="#da70d6" opacity="0.75"/><rect x="3453.0" y="378.0" width="24.0" height="2.6" fill="#c0c0c0" opacity="0.75"/><rect x="3355.0" y="382.0" width="36.0" height="2.6" fill="#c3c4d2" opacity="0.75"/><rect x="3347.0" y="386.0" width="2.0" height="2.6" fill="#da70d6" opacity="0.75"/><rect x="3339.0" y="390.0" width="2.0" height="2.6" fill="#fdd835" opacity="0.75"/></svg>
<div class="r" style="left:1222px;top:1696px;width:2346px;height:3px;background:#2c3043;"></div>
<div class="r" style="left:1222px;top:1699px;width:2346px;height:103px;background:#2a2c3f;"></div>
<svg class="s" style="left:1240px;top:1730px" width="36" height="40" viewBox="0 0 36 40"><path d="M9.1 7.9 L17.3 16.2 L25.5 7.9 M9.1 21.9 L17.3 30.2 L25.5 21.9" stroke="#a2a3bd" stroke-width="4.8" fill="none" stroke-linecap="round" stroke-linejoin="miter"/></svg>
<svg class="s" style="left:1314px;top:1730px" width="40" height="40" viewBox="0 0 40 40"><circle cx="20" cy="20" r="15.5" stroke="#a2a3bd" stroke-width="4.5" fill="none"/><path d="M9.5 9.5 L30.5 30.5" stroke="#a2a3bd" stroke-width="4.5"/></svg>
<div class="t" style="left:1400.00px;top:1730.20px;font-family:'Liberation Sans', sans-serif;font-size:40px;font-weight:400;color:#a2a3bd;letter-spacing:0.000px;">0</div>
<div class="r" style="left:1494px;top:1726px;width:48px;height:48px;background:#2e3044;border-radius:7px;box-shadow:inset 0 0 0 3px #4a4d63"></div>
<div class="t" style="left:1564.40px;top:1729.51px;font-family:'Liberation Sans', sans-serif;font-size:42px;font-weight:400;color:#a2a3bd;letter-spacing:-0.836px;">listen on all transactions</div>
<svg class="s" style="left:2112px;top:1728px" width="44" height="44" viewBox="0 0 44 44"><circle cx="17" cy="17" r="11" stroke="#a2a3bd" stroke-width="5" fill="none"/><path d="M25.5 25.5 L36 36" stroke="#a2a3bd" stroke-width="6.5" stroke-linecap="round"/></svg>
<div class="r" style="left:2183px;top:1714px;width:847px;height:76px;background:#35364a;border-radius:6px;box-shadow:inset 0 0 0 2px #464a5e"></div>
<div class="t" style="left:2220.04px;top:1730.79px;font-family:'Liberation Sans', sans-serif;font-size:44.03px;font-weight:400;color:#8b8fa0;letter-spacing:-0.817px;">Search with transaction hash or address</div>
<div class="t" style="left:1339.5px;top:1855.16px;font-family:'Liberation Mono', monospace;font-size:36.35px;color:#a2a3bd;white-space:pre;-webkit-text-stroke-width:0.7px">Type the library name to see available commands.</div>
<svg class="s" style="left:1244px;top:1998px" width="30" height="28" viewBox="0 0 30 28"><path d="M6 6.3 L24 13.8 L6 21.3" stroke="#c8c9d6" stroke-width="4.2" fill="none" stroke-linejoin="miter" stroke-miterlimit="3"/></svg>
<div class="r" style="left:3520px;top:1931px;width:24px;height:33px;background:#464a5e;border-radius:12px"></div>
<div class="t" style="left:425.80px;top:187.47px;font-family:'Liberation Sans', sans-serif;font-size:29.5px;font-weight:400;color:#1f1f1f;letter-spacing:0.220px;-webkit-text-stroke-width:0.15px"><span style="color:#1f1f1f">remix.ethereum.org</span><span style="color:#474747">/#lang=en&amp;optimize=false&amp;runs=200&amp;evmVersion=null&amp;version=soljson-v0.8.22+commit.4fc1097e.js</span></div>
<div class="t" style="left:359.00px;top:103.21px;font-family:'Liberation Sans', sans-serif;font-size:24.6px;font-weight:400;color:#1f1f1f;letter-spacing:0.368px;-webkit-text-stroke-width:0.25px">Remix - Ethereum IDE</div>
<div class="r" style="left:1138px;top:1249px;width:822px;height:149px;background:#595c76;box-shadow:0 2px 6px rgba(0,0,0,0.35)"></div>
<svg class="s" style="left:1120px;top:1305px" width="20" height="36" viewBox="0 0 20 36"><path d="M18.5 2 L2.5 19 L18.5 36 Z" fill="#595c76"/></svg>
<div class="t" style="left:1160.60px;top:1269.82px;font-family:'Liberation Sans', sans-serif;font-size:44px;font-weight:400;color:#ffffff;letter-spacing:-0.647px;">Select a compiled contract to deploy or</div>
<div class="t" style="left:1161.60px;top:1332.82px;font-family:'Liberation Sans', sans-serif;font-size:44px;font-weight:400;color:#ffffff;letter-spacing:0.018px;">to use with At Address.</div>
<div class="r" style="left:112px;top:76px;width:3456px;height:1984px;border-radius:22px;box-shadow:inset 0 0 0 1.5px rgba(255,255,255,0.13)"></div>
</div></body></html>
